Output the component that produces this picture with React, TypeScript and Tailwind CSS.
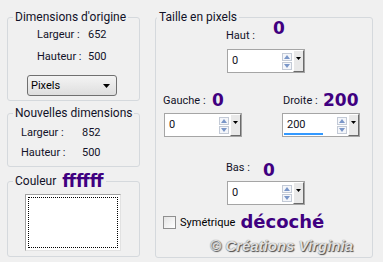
import React from "react";

const PURPLE = "text-[#400080]";

const Spin = ({ value, underline }: { value: string; underline?: boolean }) => (
  <div className="relative flex h-[24px] w-[78px] border border-[#a5a5a5] bg-white">
    <div className="flex-1 pl-[4px] text-[11px] leading-[22px] text-[#101020]">{value}</div>
    <div className="flex w-[10px] flex-col justify-center gap-[1px]">
      <div className="flex h-[8px] items-center justify-center border border-[#c3cad6] bg-[#f4f6fa]">
        <svg width="6" height="4" viewBox="0 0 6 4">
          <path d="M0 4L3 0L6 4Z" fill="#7a96c8" />
        </svg>
      </div>
      <div className="flex h-[8px] items-center justify-center border border-[#c3cad6] bg-[#f4f6fa]">
        <svg width="6" height="4" viewBox="0 0 6 4">
          <path d="M0 0L6 0L3 4Z" fill="#7a96c8" />
        </svg>
      </div>
    </div>
    <div className="ml-[1px] flex w-[11px] justify-center border-t border-l border-t-white border-l-white border-r border-b border-r-[#6b6b6b] border-b-[#6b6b6b] bg-[#e9e9e9] pt-[6px]">
      <svg width="5" height="3" viewBox="0 0 5 3">
        <path d="M0 0L5 0L2.5 3Z" fill="#000" />
      </svg>
    </div>
    {underline && <div className="absolute bottom-[1px] left-[1px] h-[2px] w-[39px] bg-[#3399ff]" />}
  </div>
);

export default function App() {
  return (
    <div className="flex h-[262px] w-[383px] bg-[#f0f0f0] pl-[7px] pt-[10px] font-['Roboto',sans-serif] text-[11px] leading-[14px] text-[#121228]">
      {/* left column */}
      <div className="flex w-[133px] flex-col">
        <fieldset className="h-[91px] rounded-[3px] border border-[#d5d9dd]">
          <legend className="ml-[5px] px-[2px] text-[12px]">Dimensions d'origine</legend>
          <div className="mt-[4px] flex pl-[29px]">
            <span className="w-[51px]">Largeur :</span>
            <span>652</span>
          </div>
          <div className="mt-[8px] flex pl-[29px]">
            <span className="w-[51px]">Hauteur :</span>
            <span>500</span>
          </div>
          <div className="ml-[19px] mt-[11px] flex h-[21px] w-[90px] items-center justify-between rounded-[3px] border border-[#707070] bg-gradient-to-b from-[#f4f4f4] to-[#dedede] pl-[3px] pr-[6px] text-black">
            <span>Pixels</span>
            <svg width="7" height="4" viewBox="0 0 7 4">
              <path d="M0 0L7 0L3.5 4Z" fill="#000" />
            </svg>
          </div>
        </fieldset>

        <fieldset className="mt-[5px] h-[61px] rounded-[3px] border border-[#d5d9dd]">
          <legend className="ml-[5px] px-[2px] text-[12px]">Nouvelles dimensions</legend>
          <div className="mt-[6px] flex pl-[13px]">
            <span className="w-[61px]">Largeur :</span>
            <span>852</span>
          </div>
          <div className="mt-[6px] flex pl-[13px]">
            <span className="w-[61px]">Hauteur :</span>
            <span>500</span>
          </div>
        </fieldset>

        <fieldset className="mt-[4px] h-[86px] rounded-[3px] border border-[#d5d9dd]">
          <legend className="ml-[5px] flex items-center px-[2px]">
            <span className="text-[12px]">Couleur</span>
            <span className={`ml-[6px] font-['DejaVu_Sans',sans-serif] text-[17px] font-bold leading-[20px] ${PURPLE}`}>ffffff</span>
          </legend>
          <div className="ml-[17px] mt-[3px] h-[57px] w-[96px] border border-t-[#a0a0a0] border-l-[#a0a0a0] border-r-[#e2e2e2] border-b-[#e2e2e2] bg-white p-[2px]">
            <div className="h-full w-full border border-dotted border-black" />
          </div>
        </fieldset>
      </div>

      {/* right group */}
      <fieldset className="ml-[15px] h-[248px] w-[218px] rounded-[3px] border border-[#d5d9dd]">
        <legend className="ml-[1px] px-[2px] text-[12px]">Taille en pixels</legend>
        <div className="pl-[8px]">
          <div className="ml-[62px] flex items-start">
            <span className="mt-[5px] w-[47px]">Haut :</span>
            <span className={`-mt-[6px] font-['DejaVu_Sans',sans-serif] text-[17px] font-bold leading-[20px] ${PURPLE}`}>0</span>
          </div>
          <div className="ml-[63px] mt-[6px]">
            <Spin value="0" />
          </div>

          <div className="mt-[17px] flex gap-[40px]">
            <div className="flex flex-col">
              <div className="-ml-[1px] flex items-start">
                <span className="mt-[4px] w-[49px]">Gauche :</span>
                <span className={`font-['DejaVu_Sans',sans-serif] text-[17px] font-bold leading-[20px] ${PURPLE}`}>0</span>
              </div>
              <div className="mt-[3px]">
                <Spin value="0" />
              </div>
            </div>
            <div className="flex flex-col">
              <div className="ml-[1px] flex items-start">
                <span className="mt-[4px] w-[40px]">Droite :</span>
                <span className={`font-['DejaVu_Sans',sans-serif] text-[17px] font-bold leading-[20px] ${PURPLE}`}>200</span>
              </div>
              <div className="mt-[3px]">
                <Spin value="200" underline />
              </div>
            </div>
          </div>

          <div className="ml-[62px] mt-[23px] flex items-start">
            <span className="mt-[1px] w-[37px]">Bas :</span>
            <span className={`font-['DejaVu_Sans',sans-serif] text-[17px] font-bold leading-[20px] ${PURPLE}`}>0</span>
          </div>
          <div className="ml-[63px] mt-[1px]">
            <Spin value="0" />
          </div>

          <div className="-ml-[1px] mt-[6px] flex items-start">
            <div className="mt-[5px] h-[13px] w-[13px] border border-[#8f8f8f] bg-gradient-to-br from-[#e4e4e4] to-white" />
            <span className="ml-[4px] mt-[5px] text-black">Symétrique</span>
            <span className={`ml-[5px] font-['DejaVu_Sans',sans-serif] text-[18px] font-bold leading-[22px] ${PURPLE}`}>décoché</span>
          </div>

          <div className="ml-[46px] mt-[4px] font-['Liberation_Sans',sans-serif] text-[15px] font-bold italic leading-[18px] text-[#e2e2e2] [text-shadow:1px_1px_1px_#4a4a4a,0_0_1px_#606060]">
            © Créations Virginia
          </div>
        </div>
      </fieldset>
    </div>
  );
}
